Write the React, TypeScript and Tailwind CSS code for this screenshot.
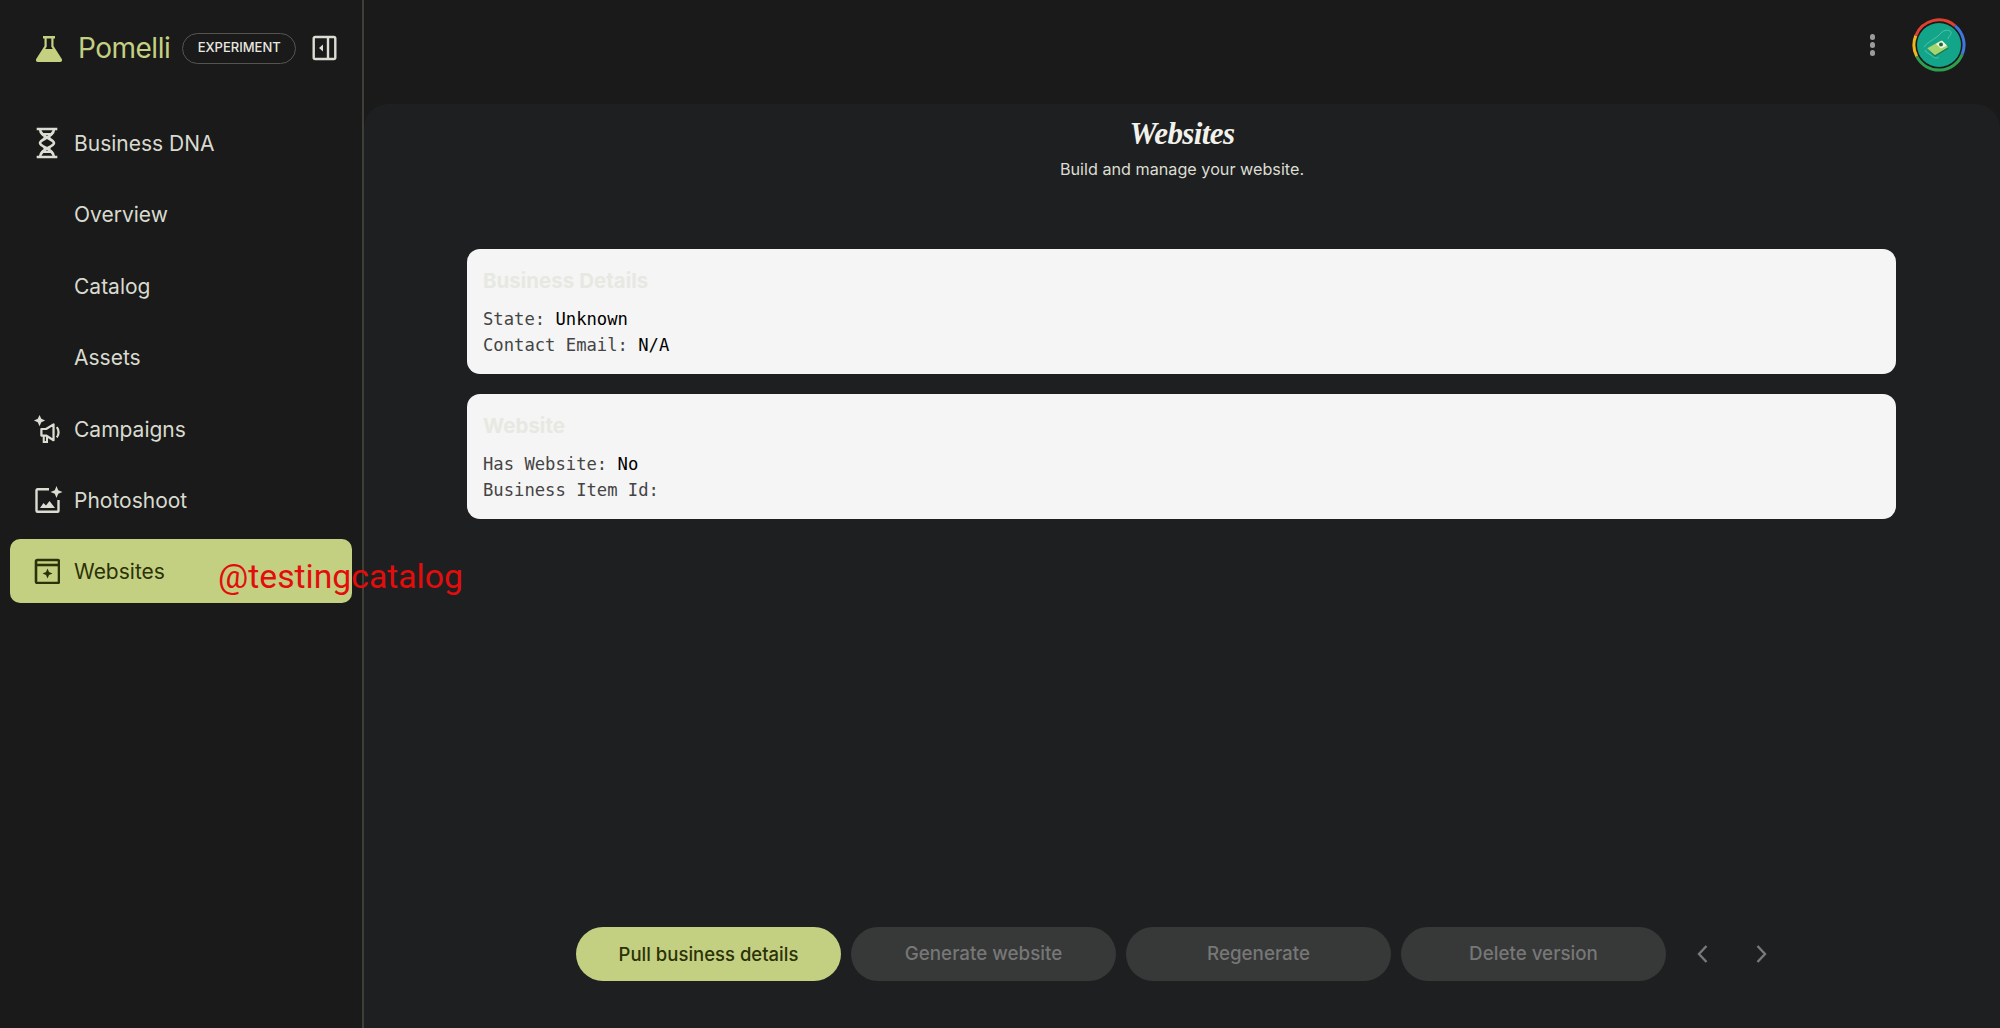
import React from "react";

const sans = "font-['Inter','Noto_Sans',sans-serif]";

function Flask() {
  return (
    <svg width="28" height="28" viewBox="0 0 28 28" fill="none">
      <path d="M8 2h12v2.500h-1.500v7.500l8.300 13c.8 1.400 0 3-1.700 3H2.900c-1.700 0-2.500-1.600-1.700-3l8.300-13V4.500H8z" fill="#c5d181" />
      <path d="M11.700 4.500h4.600v8.300l1.500 2.200H10.200l1.500-2.200z" fill="#1a1a1a" />
    </svg>
  );
}

function Collapse() {
  return (
    <svg width="25" height="26" viewBox="0 0 25 26" fill="none">
      <rect x="1.700" y="2" width="21.600" height="22" rx="1.500" stroke="#dcddd2" strokeWidth="2.400" />
      <path d="M16 2v22" stroke="#dcddd2" strokeWidth="2.400" />
      <path d="M11 9.500v7L7 13z" fill="#dcddd2" />
    </svg>
  );
}

function Dna() {
  return (
    <svg width="28" height="32" viewBox="0 0 28 32" fill="none" stroke="#dcddd2" strokeWidth="2.600">
      <path d="M5 2h18M5 30h18" strokeLinecap="square" />
      <path d="M7 2c0 8 14 10 14 14S7 22 7 30" />
      <path d="M21 2c0 8-14 10-14 14s14 6 14 14" />
      <path d="M8 7h12M10.500 11h7M10.500 21h7M8 25h12" strokeWidth="2" />
    </svg>
  );
}

function Campaign() {
  return (
    <svg width="30" height="30" viewBox="0 0 30 30" fill="none">
      <path d="M7 0l1.900 4.100L13 6l-4.100 1.900L7 12l-1.900-4.100L1 6l4.100-1.900z" fill="#dcddd2" />
      <path d="M9 15h5l8-5v17l-8-5H9z" stroke="#dcddd2" strokeWidth="2.400" strokeLinejoin="round" />
      <path d="M11.500 22v7h3.500v-6" stroke="#dcddd2" strokeWidth="2.200" />
      <path d="M25.500 13c2.500 3 2.500 8 0 11" stroke="#dcddd2" strokeWidth="2.400" />
    </svg>
  );
}

function Photo() {
  return (
    <svg width="28" height="28" viewBox="0 0 28 28" fill="none" className="overflow-visible">
      <path d="M16 3.200H4.500a1 1 0 0 0-1 1v20.500a1 1 0 0 0 1 1h20a1 1 0 0 0 1-1V14" stroke="#dcddd2" strokeWidth="2.400" />
      <path d="M23.500 0l1.700 4.300L29.500 6l-4.300 1.700L23.500 12l-1.700-4.300L17.500 6l4.300-1.700z" fill="#dcddd2" />
      <path d="M7 22l3.500-5 2.500 2.500 3.500-4.500 5.500 7z" fill="#dcddd2" />
    </svg>
  );
}

function Web() {
  return (
    <svg width="26" height="26" viewBox="0 0 26 26" fill="none">
      <rect x="2" y="2" width="23" height="23" rx="1.500" stroke="#2c3208" strokeWidth="2.600" />
      <path d="M2 7h23" stroke="#2c3208" strokeWidth="2.600" />
      <path d="M13.500 10.500l1.500 3.500 3.500 1.500-3.500 1.500-1.500 3.500-1.500-3.500-3.500-1.500 3.500-1.500z" fill="#2c3208" />
    </svg>
  );
}

function Avatar() {
  return (
    <svg width="54" height="54" viewBox="0 0 54 54" fill="none">
      <circle cx="27" cy="27" r="22" fill="#12a589" />
      <path d="M3.800 17.600A25 25 0 0 1 43.100 7.800" stroke="#e0402f" strokeWidth="3" />
      <path d="M43.100 7.800A25 25 0 0 1 50.200 36.400" stroke="#3f78de" strokeWidth="3" />
      <path d="M50.200 36.400A25 25 0 0 1 4.700 38.400" stroke="#2f9e4f" strokeWidth="3" />
      <path d="M4.700 38.400A25 25 0 0 1 3.800 17.600" stroke="#f2b51d" strokeWidth="3" />
      <path d="M12 29c3-5 12-8 17-14 3-3 8-4 10-1 1 3-3 4-3 7M13 32c1 3 5 4 7 6 2 2 5 3 7 1" stroke="#6fcdb4" strokeWidth="0.700" />
      <path d="M15.300 30.300L28.700 22.700 36.300 29.300 23 37.300z" fill="#a6d46f" />
      <path d="M23 37.300l13.300-8v1.400L23 38.800l-7.700-7z" fill="#1d7d52" />
      <path d="M24 26l6-3.400 5 5-6 3z" fill="#eef7e2" />
      <circle cx="29" cy="26.500" r="2" fill="#1f6a3d" />
    </svg>
  );
}

function NavItem({ label, icon, active }: { label: string; icon?: React.ReactNode; active?: boolean }) {
  return (
    <div
      className={
        active
          ? "flex h-[64px] items-center rounded-[10px] bg-[#c4d081] text-[#2c3208]"
          : "flex h-[64px] items-center rounded-[10px] text-[#d9dacf]"
      }
    >
      <div className="ml-[23px] mr-[13px] flex w-[28px] shrink-0 items-center justify-center">{icon}</div>
      <span className="pt-[1px] text-[21px] leading-none">{label}</span>
    </div>
  );
}

function Card({ title, rows }: { title: string; rows: [string, string][] }) {
  return (
    <div className="h-[124.500px] rounded-[13px] bg-[#f5f5f5] px-[16px] pt-[19px]">
      <div className="h-[25px] text-[20.500px] font-bold leading-[25px] text-[#e8e8e2]">{title}</div>
      <div className="mt-[14px] font-['DejaVu_Sans_Mono',monospace] text-[17.200px] leading-[25.500px] text-[#444444]">
        {rows.map(([k, v]) => (
          <div key={k} className="whitespace-pre">
            {k}: <span className="text-black">{v}</span>
          </div>
        ))}
      </div>
    </div>
  );
}

function Pill({ label, primary }: { label: string; primary?: boolean }) {
  return (
    <div
      className={
        primary
          ? "flex h-[54px] w-[265px] items-center justify-center rounded-full bg-[#c4d081] pt-[1px] text-[18.500px] font-medium text-[#2c3208]"
          : "flex h-[54px] w-[265px] items-center justify-center rounded-full bg-[#373838] pt-[1px] text-[18.800px] font-medium text-[#767776]"
      }
    >
      {label}
    </div>
  );
}

function Chevron({ right }: { right?: boolean }) {
  return (
    <div className="flex h-[54px] w-[54px] items-center justify-center">
      <svg width="14" height="20" viewBox="0 0 14 20" fill="none" stroke="#787978" strokeWidth="2.400">
        <path d={right ? "M3.500 2l7.500 8-7.500 8" : "M10.500 2L3 10l7.500 8"} />
      </svg>
    </div>
  );
}

export default function App() {
  return (
    <div className={`${sans} relative flex h-[1028px] w-[2000px] overflow-hidden bg-[#1a1a1a]`}>
      <aside className="h-full w-[364px] shrink-0 border-r-2 border-[#3f3f3a]">
        <div className="flex h-[94px] items-center pl-[35px] pt-[2px]">
          <Flask />
          <span className="ml-[15px] text-[28px] leading-none tracking-[-0.5px] text-[#c4d081]">Pomelli</span>
          <span className="ml-[12px] flex h-[31px] w-[114px] items-center justify-center rounded-full border border-[#55554f] text-[13px] font-medium text-[#e8e8e0]">
            EXPERIMENT
          </span>
          <span className="ml-[16px] flex">
            <Collapse />
          </span>
        </div>
        <nav className="flex flex-col gap-[7.400px] px-[10px] pt-[17px]">
          <NavItem label="Business DNA" icon={<Dna />} />
          <NavItem label="Overview" />
          <NavItem label="Catalog" />
          <NavItem label="Assets" />
          <NavItem label="Campaigns" icon={<Campaign />} />
          <NavItem label="Photoshoot" icon={<Photo />} />
          <NavItem label="Websites" icon={<Web />} active />
        </nav>
      </aside>

      <div className="flex min-w-0 flex-1 flex-col">
        <header className="flex h-[104px] shrink-0 items-start justify-end pr-[34px] pt-[18px]">
          <div className="mr-[37px] mt-[16px] flex flex-col gap-[2.500px]">
            <span className="h-[5.500px] w-[5.500px] rounded-full bg-[#9b9b9b]" />
            <span className="h-[5.500px] w-[5.500px] rounded-full bg-[#9b9b9b]" />
            <span className="h-[5.500px] w-[5.500px] rounded-full bg-[#9b9b9b]" />
          </div>
          <Avatar />
        </header>
        <main className="flex min-h-0 flex-1 flex-col rounded-t-[24px] bg-[#1e1f21]">
          <div className="flex flex-col items-center pt-[8px]">
            <h1 className="font-['Liberation_Serif',serif] text-[31px] font-bold italic leading-[44px] tracking-[-0.6px] text-[#f2f2ec]">
              Websites
            </h1>
            <p className="mt-[1px] text-[16.200px] leading-[24px] text-[#dcddd2]">Build and manage your website.</p>
          </div>
          <div className="mt-[68px] flex flex-col gap-[20.500px] pl-[103px] pr-[104px]">
            <Card title="Business Details" rows={[["State", "Unknown"], ["Contact Email", "N/A"]]} />
            <Card title="Website" rows={[["Has Website", "No"], ["Business Item Id", ""]]} />
          </div>
          <div className="mt-auto flex items-center justify-center pb-[47px]">
            <div className="flex gap-[10px]">
              <Pill label="Pull business details" primary />
              <Pill label="Generate website" />
              <Pill label="Regenerate" />
              <Pill label="Delete version" />
            </div>
            <div className="ml-[10px] flex gap-[4px]">
              <Chevron />
              <Chevron right />
            </div>
          </div>
        </main>
      </div>

      <span className="absolute left-[218px] top-[555px] font-['Roboto',sans-serif] text-[33.700px] leading-[44px] text-[#e30d0d]">
        @testingcatalog
      </span>
    </div>
  );
}
